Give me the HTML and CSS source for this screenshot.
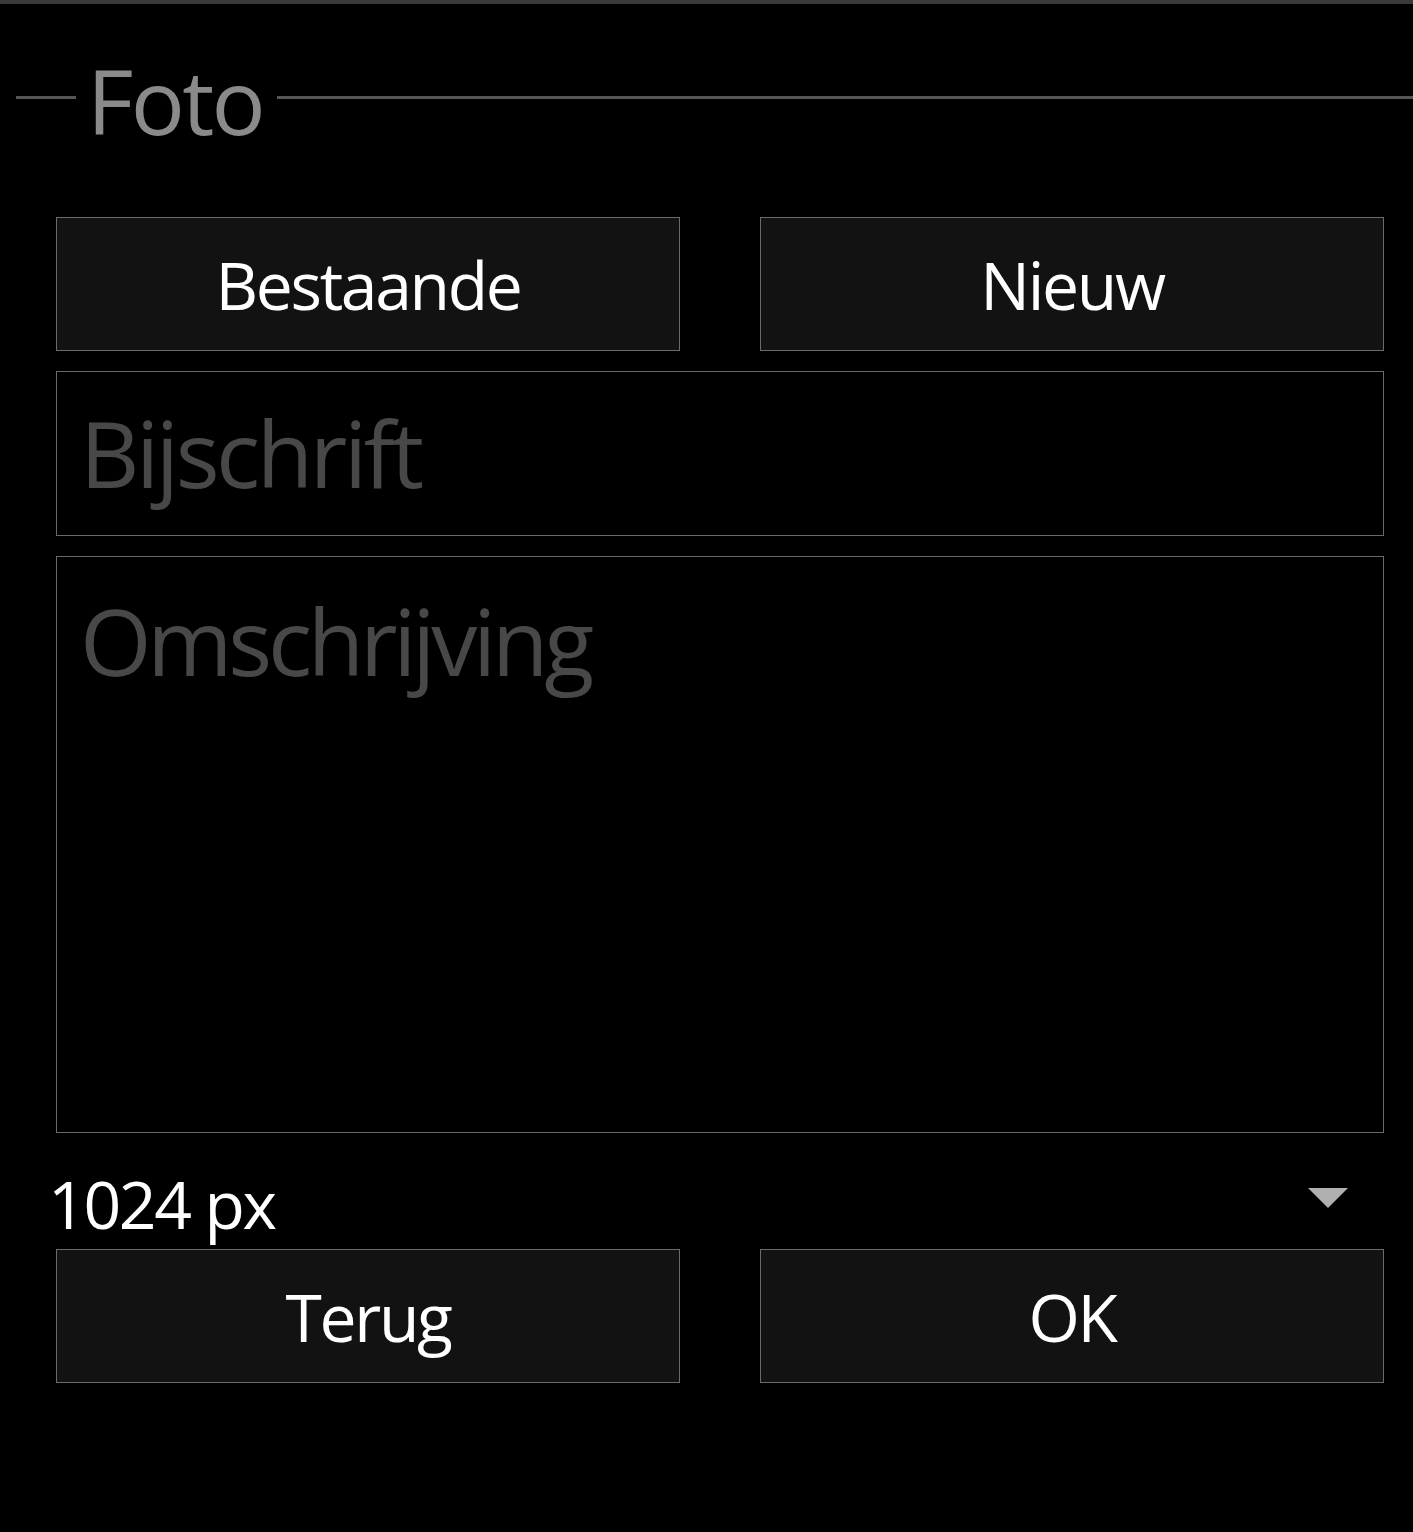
FILE: index.html
```html
<!DOCTYPE html>
<html>
<head>
<meta charset="utf-8">
<link rel="stylesheet" href="styles.css">
</head>
<body>
<div class="topbar"></div>
<div class="legend">
  <div class="line short"></div>
  <div class="legend-text">Foto</div>
  <div class="line long"></div>
</div>
<div class="content">
  <div class="btn-row">
    <div class="btn">Bestaande</div>
    <div class="btn">Nieuw</div>
  </div>
  <div class="field input"><span class="placeholder">Bijschrift</span></div>
  <div class="field textarea"><span class="placeholder placeholder-long">Omschrijving</span></div>
  <div class="spinner">
    <span class="spinner-text">1024 px</span>
    <span class="arrow"></span>
  </div>
  <div class="btn-row">
    <div class="btn">Terug</div>
    <div class="btn">OK</div>
  </div>
</div>
</body>
</html>
```
FILE: styles.css
```css
html, body {
  margin: 0;
  padding: 0;
  background: #000;
  width: 1413px;
  height: 1532px;
  overflow: hidden;
  font-family: "Open Sans", "Noto Sans", sans-serif;
}
.topbar {
  height: 4px;
  background: #3a3a3a;
}
.legend {
  display: flex;
  align-items: center;
  height: 186px;
  margin-top: 0;
  margin-bottom: -2px;
}
.line {
  height: 3px;
  background: #555;
}
.line.short {
  width: 60px;
  margin-left: 16px;
}
.line.long {
  flex: 1;
}
.legend-text {
  color: #8a8a8a;
  font-size: 90px;
  line-height: 1;
  letter-spacing: -0.03em;
  padding: 0 14px 0 11px;
  margin-top: 6px;
}
.content {
  padding: 29px 29px 0 56px;
  display: flex;
  flex-direction: column;
}
.btn-row {
  display: grid;
  grid-template-columns: 1fr 1fr;
  column-gap: 80px;
}
.btn {
  height: 132px;
  border: 1px solid #6a6a6a;
  background: #121212;
  color: #fff;
  font-size: 66px;
  letter-spacing: -0.035em;
  display: flex;
  align-items: center;
  justify-content: center;
}
.field {
  border: 1px solid #6a6a6a;
  background: #000;
  margin-top: 20px;
  padding-left: 23px;
  box-sizing: border-box;
}
.input {
  height: 165px;
  display: flex;
  align-items: center;
}
.textarea {
  height: 577px;
  padding-top: 29px;
}
.placeholder {
  color: #484848;
  font-size: 92px;
  letter-spacing: -0.037em;
  line-height: 1.2;
}
.placeholder-long {
  letter-spacing: -0.046em;
}
.spinner {
  height: 116px;
  display: flex;
  align-items: center;
  justify-content: space-between;
  margin-left: -8px;
  padding-top: 24px;
  box-sizing: border-box;
}
.spinner-text {
  color: #fff;
  font-size: 66px;
  letter-spacing: -0.035em;
}
.arrow {
  width: 0;
  height: 0;
  border-left: 20px solid transparent;
  border-right: 20px solid transparent;
  border-top: 20px solid #b0b0b0;
  margin-right: 36px;
  margin-top: -10px;
}
```
